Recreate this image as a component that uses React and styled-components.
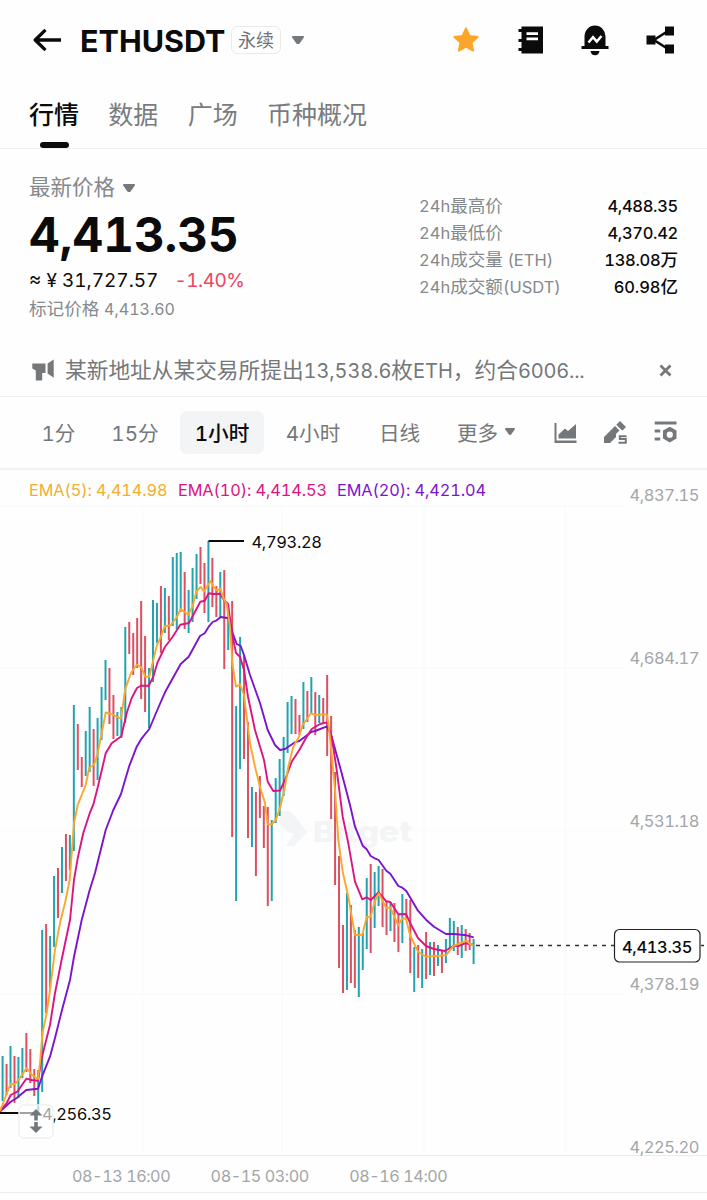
import React from "react";
import styled, { createGlobalStyle } from "styled-components";

const GlobalStyle = createGlobalStyle`
  * {
    box-sizing: border-box;
  }
  body {
    margin: 0;
    background: #fff;
    color: #0b0b0b;
    font-family: Inter, "Noto Sans CJK SC", sans-serif;
    font-feature-settings: "tnum";
  }
`;

const Page = styled.main`
  width: 707px;
  height: 1200px;
  overflow: hidden;
  background: #fefefe;
`;

const Header = styled.header`
  display: flex;
  align-items: center;
  height: 80px;
  padding: 0 32px 0 32px;
`;

const Title = styled.h1`
  margin: 2px 0 0 18px;
  width: 151px;
  font-size: 30.5px;
  line-height: 40px;
  font-weight: 700;
  white-space: nowrap;
`;

const Badge = styled.span`
  width: 50px;
  height: 28px;
  border: 1px solid #e9eaea;
  border-radius: 6px;
  color: #707476;
  font-size: 18px;
  line-height: 28px;
  text-align: center;
`;

const Caret = styled.svg`
  display: block;
  flex: none;
  width: ${(props) => props.$size || 12}px;
  height: ${(props) => (props.$size || 12) * 0.72}px;
  margin-left: ${(props) => props.$gap || 0}px;
  fill: #74787a;
`;

const HeaderIcons = styled.div`
  display: flex;
  align-items: center;
  gap: 36.6px;
  margin-left: auto;

  svg {
    display: block;
  }
`;

const Tabs = styled.nav`
  display: flex;
  gap: 29.3px;
  height: 69px;
  padding: 0 29px;
  border-bottom: 1px solid #f0f0f0;
`;

const Tab = styled.a`
  display: flex;
  flex-direction: column;
  align-items: center;
  justify-content: space-between;
  padding-top: 17px;
  color: ${(props) => (props.$active ? "#0b0b0b" : "#787c7f")};
  font-size: 25px;
  line-height: 36px;
  font-weight: ${(props) => (props.$active ? 500 : 400)};

  &::after {
    content: "";
    width: 29px;
    height: 6px;
    border-radius: 3px;
    background: ${(props) => (props.$active ? "#0b0b0b" : "transparent")};
  }
`;

const Summary = styled.section`
  display: flex;
  justify-content: space-between;
  height: 195px;
  padding: 24px 29px 0;
`;

const PriceColumn = styled.div`
  display: flex;
  flex-direction: column;
`;

const PriceLabel = styled.div`
  display: flex;
  align-items: center;
  height: 28px;
  color: #85898b;
  font-size: 21.5px;
  line-height: 26px;

  svg {
    margin-top: 2px;
  }
`;

const Price = styled.div`
  height: 67px;
  font-size: 47.5px;
  line-height: 67px;
  font-weight: 700;
`;

const FiatRow = styled.div`
  display: flex;
  gap: 16px;
  height: 28px;
  font-size: 19px;
  line-height: 26px;
  white-space: nowrap;
`;

const Change = styled.span`
  color: #ee4560;
  letter-spacing: -0.5px;
`;

const MarkPrice = styled.div`
  color: #85898b;
  font-size: 17.6px;
  line-height: 26px;
  white-space: nowrap;
`;

const Num = styled.span`
  font-size: ${(props) => props.$size}px;
  letter-spacing: ${(props) => props.$spacing || 0}px;
`;

const Stats = styled.dl`
  width: 259px;
  margin: 19px 0 0;
`;

const StatRow = styled.div`
  display: flex;
  justify-content: space-between;
  height: 27px;
  font-size: 17.6px;
  line-height: 27px;
  white-space: nowrap;

  dt {
    color: #85898b;
  }
  dd {
    margin: 0;
    font-weight: 500;
  }
`;

const News = styled.section`
  display: flex;
  align-items: center;
  height: 53px;
  padding: 0 35px 0 32px;
  border-bottom: 1px solid #efefef;
  color: #74787a;

  svg {
    display: block;
    flex: none;
  }
`;

const NewsText = styled.p`
  flex: 1;
  margin: 0 0 0 11px;
  font-size: 21.7px;
  line-height: 30px;
  white-space: nowrap;
`;

const Intervals = styled.nav`
  display: flex;
  align-items: center;
  height: 73px;
  padding-left: 21px;
  border-bottom: 2px solid #f3f3f4;
  color: #74787a;

  svg {
    display: block;
    flex: none;
  }
`;

const Interval = styled.a`
  display: flex;
  align-items: center;
  justify-content: center;
  width: ${(props) => props.$width}px;
  height: 43px;
  margin-top: -1px;
  margin-left: ${(props) => (props.$active ? 6 : 0)}px;
  border-radius: 7px;
  background: ${(props) => (props.$active ? "#f2f4f5" : "transparent")};
  color: ${(props) => (props.$active ? "#0b0b0b" : "#74787a")};
  font-size: 20.6px;
  font-weight: ${(props) => (props.$active ? 500 : 400)};
  white-space: nowrap;
`;

const Tools = styled.div`
  display: flex;
  align-items: center;
  gap: 26px;
  margin-left: 19px;
`;

const Chart = styled.section`
  position: relative;
  height: 686px;
  border-bottom: 1px solid #ebebec;
`;

const Plot = styled.svg`
  display: block;
  width: 707px;
  height: 686px;
`;

const Legend = styled.div`
  position: absolute;
  top: 8px;
  left: 29px;
  display: flex;
  font-size: 16.3px;
  line-height: 24px;
  letter-spacing: -0.08px;
  white-space: nowrap;
`;

const LegendItem = styled.span`
  width: ${(props) => props.$width}px;
  color: ${(props) => props.$color};
`;

const TimeAxis = styled.footer`
  display: flex;
  gap: 40px;
  height: 37px;
  padding-left: 72px;
  border-bottom: 1px solid #ebebec;
  color: #a3a6a8;
  font-size: 16.2px;
  line-height: 41px;
`;

const Time = styled.span`
  width: 98.6px;
  letter-spacing: -0.45px;
  white-space: nowrap;
`;

const UP = "#22a3af";
const DOWN = "#dc5062";
const ORANGE = "#f6a92c";
const PINK = "#da1484";
const PURPLE = "#7b14cf";

// [direction, high, low] for each hour
const candles = [
  ["u", 1056, 1101], ["d", 1064, 1095], ["u", 1046, 1088], ["d", 1056, 1103],
  ["u", 1057, 1098], ["u", 1048, 1078], ["d", 1033, 1072], ["d", 1049, 1083],
  ["d", 1069, 1096], ["u", 1070, 1113], ["u", 930, 1092], ["d", 924, 1013],
  ["u", 936, 988], ["u", 876, 947], ["d", 868, 918], ["u", 847, 893],
  ["d", 834, 881], ["u", 835, 870], ["u", 705, 851], ["d", 724, 770],
  ["d", 757, 787], ["u", 731, 776], ["u", 707, 772], ["d", 729, 786],
  ["u", 718, 780], ["u", 687, 740], ["u", 660, 700], ["d", 668, 724],
  ["d", 695, 739], ["u", 712, 736], ["u", 707, 738], ["u", 627, 723],
  ["d", 622, 654], ["d", 633, 675], ["d", 618, 668], ["d", 601, 699],
  ["d", 636, 712], ["u", 668, 728], ["u", 600, 682], ["u", 603, 643],
  ["d", 586, 653], ["u", 588, 633], ["d", 596, 640], ["u", 557, 626],
  ["u", 553, 629], ["u", 552, 612], ["d", 572, 629], ["u", 590, 633],
  ["u", 568, 622], ["u", 554, 599], ["d", 547, 584], ["d", 563, 613],
  ["u", 541, 622], ["d", 558, 607], ["d", 586, 617], ["u", 572, 617],
  ["d", 570, 669], ["u", 604, 650], ["d", 601, 837], ["u", 706, 901],
  ["u", 637, 769], ["d", 655, 759], ["d", 722, 838], ["u", 787, 847],
  ["d", 792, 876], ["d", 776, 818], ["d", 806, 848], ["d", 807, 906],
  ["u", 820, 901], ["u", 778, 823], ["u", 759, 816], ["u", 737, 796],
  ["u", 702, 753], ["u", 696, 734], ["d", 699, 734], ["d", 715, 735],
  ["u", 682, 729], ["d", 691, 722], ["u", 677, 714], ["d", 692, 735],
  ["u", 695, 723], ["d", 698, 723], ["d", 675, 756], ["d", 716, 819],
  ["d", 772, 885], ["d", 856, 968], ["d", 925, 993], ["u", 893, 990],
  ["d", 905, 983], ["d", 930, 988], ["u", 927, 997], ["u", 933, 970],
  ["u", 878, 949], ["d", 864, 953], ["u", 872, 928], ["u", 866, 906],
  ["d", 869, 927], ["d", 901, 935], ["u", 903, 931], ["d", 903, 942],
  ["d", 915, 952], ["u", 894, 943], ["d", 899, 920], ["d", 900, 973],
  ["u", 947, 992], ["d", 945, 978], ["u", 949, 988], ["d", 932, 979],
  ["u", 942, 975], ["d", 942, 976], ["u", 945, 966], ["d", 950, 973],
  ["u", 939, 963], ["u", 918, 948], ["u", 921, 951], ["d", 927, 955],
  ["u", 925, 958], ["d", 929, 951], ["d", 933, 950], ["u", 939, 964],
];

const ema5 =
  "0,1111 7,1093 10.5,1084 15,1084 20,1078 26.5,1068 32,1075 38,1079 40,1063 42.5,1033 46.7,1013 50,990 55,950 60,923 65,903 69.7,880 74,823 77.7,805 85.7,785 89.3,767.5 94,765 97.3,755 101.7,733 105.7,712.5 111.5,714 121,718.7 125.3,689 131,673 136.7,664.7 141,667 145.3,676.7 149.3,676.7 153.3,660 157,645 161,636.7 164.7,626.3 170.7,625.3 176.7,617.3 180.7,609 188.3,614.7 192.7,606 196.3,591.7 200.7,587 204,591.3 210.7,581 213.3,586.7 217.3,590.7 220.3,588.3 223.3,598 226.7,604 230,626.7 232.3,663 236,686.7 240,684.3 244,695 246.7,716.7 250,743 255,766.7 260,786.7 265,803 267.7,824.3 271.7,824.3 275.7,820 280,808 285,786.7 288.3,766.7 293.3,746.7 299,736.7 302.7,725 311,713.3 315,715 326.7,714.3 328.3,723 331,746.7 335,790 338.3,840 342.7,871.7 348.3,896.7 355,935 362.3,934.7 366.7,917 370.7,916.7 374.7,901.7 378.7,893.3 382.3,900 386.3,908.3 390.3,907.3 394.3,916.7 398.3,925.3 402.3,918.3 406,918.7 410,935 418,951.7 426,956.7 446,955.3 453.3,946 466.7,940.7 470,944 473.7,945";

const ema10 =
  "0,1111 6.7,1103 10.7,1095 17.3,1091.7 26.3,1078.7 31.7,1080 38,1080.7 42,1056.7 50,1025 55,993 62,958 70,920 74,880 78,856.7 83.3,833 89.7,813.3 93.7,803.3 98.3,785 105.7,753.3 111.7,743.3 121.3,736.2 126.7,713 131.7,698 137,688 141,685.7 148.7,685.7 153.3,676.7 157.3,663 164.7,647.3 172.7,636.7 180.3,624.7 189,623 193.3,615 200.3,601.7 204.7,600.7 208.7,593.3 213.3,594 220,593.7 224,600 228,604 232,633 236,653 240,656.7 244,670 248,696.7 255,730 264,760 267.7,781.7 273.3,791 280,790.5 285,780 291.7,761.7 299.3,750 306.7,736.7 311.7,729 320,724 327,722.3 331.7,736.7 336.7,770 342.7,816.7 348.3,843.3 355,881.7 362.3,899.3 366.7,897.3 370.7,900 378.7,892.3 386.3,901.3 390.3,902 398.3,914.3 406,914 410,922.7 418,938 426,946 434,949 445,951 453.3,946 458.3,946 465,943.3 473.7,944.7";

const ema20 =
  "0,1111.5 10.7,1101.7 16.7,1098 26.3,1090 38,1088.7 42,1076.7 50,1056.7 55,1038 62,1010 70,980 74,956.7 81.7,920 89.7,890 95,873 105.7,830 113.3,810 121,794 129,766.7 136.7,746.7 141.7,738.3 149.3,729 157.3,710 165.3,691.7 173.3,677.3 180.7,664 188.7,656.7 200,636 204.7,633.3 208.7,626.7 212.7,622 216.7,620.3 220.7,617 228.7,618.3 232.7,633.3 236.7,644 240.7,646 244,655 250,675 260,703 267.7,730 275,745 280,750 285,749 295,742.3 299.3,741 311.7,731.7 315,731 327,726.3 331.7,736.7 341.7,773.3 350,805 355,826.7 362.7,845.7 366.7,849.3 370.7,856 374.7,858.3 378.7,860 386.3,870.7 390.3,873.7 398.3,886 402.3,887.7 406.3,891 418,910.7 426,919.7 434,926.7 446,934 454,934 466.7,935.3 473.7,937.3";

const priceTicks = [
  ["4,837.15", 501],
  ["4,684.17", 664],
  ["4,531.18", 827],
  ["4,378.19", 990],
  ["4,225.20", 1153],
];

function DownCaret(props) {
  return (
    <Caret viewBox="0 0 12 9" preserveAspectRatio="none" {...props}>
      <path d="M1 0h10q1.4 0 .8 1.6L7.6 7.7Q6 9.6 4.4 7.7L.2 1.6Q-.4 0 1 0z" />
    </Caret>
  );
}

function BackIcon() {
  return (
    <svg width="30" height="26" viewBox="0 0 30 26" fill="none" stroke="#0b0b0b" strokeWidth="3.3">
      <path d="M13.5 2.8 3.2 13 13.500 23.2M3.200 13H29" strokeLinejoin="round" />
    </svg>
  );
}

function StarIcon() {
  return (
    <svg width="28" height="28" viewBox="0 0 28 28" fill="#fba629">
      <path
        d="M14 2.4 17.4 9.9 25.6 10.9 19.5 16.5 21.1 24.6 14 20.6 6.9 24.6 8.5 16.5 2.4 10.9 10.6 9.9z"
        stroke="#fba629"
        strokeWidth="2"
        strokeLinejoin="round"
      />
    </svg>
  );
}

function NotebookIcon() {
  return (
    <svg width="28" height="28" viewBox="0 0 28 28" fill="#0b0b0b">
      <path d="M4.500 .5H26V27.5H4.500V25H1.500V22H4.500V16H1.500V13H4.500V6H1.500V3H4.500z" />
      <path d="M9.500 6.2H21V9H9.500zM9.500 11.4H21V14.200H9.500z" fill="#fff" />
    </svg>
  );
}

function AlertIcon() {
  return (
    <svg width="28" height="32" viewBox="0 0 28 32" fill="#0b0b0b">
      <path d="M3.500 22V12.5a10.500 11 0 0 1 21 0V22H27.500V25H.5V22z" />
      <path d="M9.500 27h9q-.6 4.200-4.500 4.200T9.500 27z" />
      <path d="M7.500 18.500 12 13.200 15.800 17.600 20.500 12" fill="none" stroke="#fff" strokeWidth="2.5" />
    </svg>
  );
}

function ShareIcon() {
  return (
    <svg width="29" height="28" viewBox="0 0 29 28" fill="#0b0b0b">
      <path d="M.5 9.500h9v9h-9zM19 .5h9v9h-9zM19 18.500h9v9h-9z" />
      <path d="M22 5 8 14 22 23" fill="none" stroke="#0b0b0b" strokeWidth="2.6" />
    </svg>
  );
}

function MegaphoneIcon() {
  return (
    <svg width="22" height="22" viewBox="0 0 22 22" fill="#74787a">
      <path d="M.3 4.500H13.500V14H10.200V21.500H3.800V14L3.800 11.500.3 9.500zM15.600 4.500 21.700 .5V18.800L15.600 14.500z" />
    </svg>
  );
}

function AreaIcon() {
  return (
    <svg width="23" height="22" viewBox="0 0 23 22" fill="#74787a">
      <path d="M.5 1h2v17.500H22.500V21H.5z" />
      <path d="M4.500 16.500V12.500L11 6.500 14 9 22 2V16.500z" />
    </svg>
  );
}

function PencilIcon() {
  return (
    <svg width="25" height="25" viewBox="0 0 25 25" fill="#74787a">
      <path d="M1 17 12 6 18 12 7 23H1zM13.300 4.700 17 1 23 7 19.300 10.700z" />
      <path d="M16.500 10.500H25V25H13V14z" fill="#fefefe" />
      <path d="M23.500 16.200h-6.700v2.900h6v3.600h-7.300" fill="none" stroke="#74787a" strokeWidth="2" />
    </svg>
  );
}

function SettingsIcon() {
  return (
    <svg width="23" height="23" viewBox="0 0 23 23" fill="#74787a">
      <path d="M.7 .5H22.500V3.600H.7zM.7 8.500H6.200V11.400H.7zM.7 16.500H6.200V19.500H.7z" />
      <path
        d="M15.800 5.800 22.500 9.600V17.600L15.800 21.600 9 17.600V9.600zM15.800 10.600a3.100 3.100 0 1 0 0 6.200a3.100 3.100 0 1 0 0-6.200z"
        fillRule="evenodd"
      />
    </svg>
  );
}

function ChartPlot() {
  return (
    <Plot viewBox="0 470 707 686">
      <g stroke="#f9fafa" strokeWidth="1.5">
        <path d="M0 506H624M0 668H624M0 830.500H624M0 994H624" />
        <path d="M142.500 506V1152M282 506V1152M424 506V1152M565 506V1152" />
      </g>

      <g fill="#f3f4f5">
        <path d="M281 811h9l8 9 9 12-13 14h-8l8-12-6-2-9-9z" />
        <text x="313" y="842" fontSize="28" fontWeight="800" textLength="99" lengthAdjust="spacingAndGlyphs">
          Bitget
        </text>
      </g>

      {candles.map(([dir, high, low], i) => (
        <line
          key={i}
          x1={2.6 + i * 3.958}
          x2={2.6 + i * 3.958}
          y1={high}
          y2={low}
          stroke={dir === "u" ? UP : DOWN}
          strokeWidth="2"
        />
      ))}

      <g fill="none" strokeWidth="1.9" strokeLinejoin="round">
        <polyline points={ema20} stroke={PURPLE} />
        <polyline points={ema10} stroke={PINK} />
        <polyline points={ema5} stroke={ORANGE} />
      </g>

      <path d="M208.500 541H244M0 1113H38" stroke="#0b0b0b" strokeWidth="1.8" />
      <g fill="#0b0b0b" fontSize="16.5">
        <text x="251.500" y="547.500" textLength="70.500">4,793.28</text>
        <text x="42" y="1119.500" textLength="70">4,256.35</text>
      </g>

      <g fill="#a3a6a8" fontSize="16.5">
        {priceTicks.map(([label, y]) => (
          <text key={label} x="629.500" y={y} textLength="70">
            {label}
          </text>
        ))}
      </g>

      <path d="M476 945.500H614M701 945.500H704" stroke="#333" strokeWidth="1.4" strokeDasharray="4 5" />
      <rect x="614.500" y="929.500" width="85.500" height="32.500" rx="5" fill="#fff" stroke="#222" strokeWidth="1.2" />
      <text x="622" y="952.500" fontSize="16.500" fontWeight="550" fill="#0b0b0b" textLength="70.500">
        4,413.35
      </text>

      <rect
        x="19"
        y="1105"
        width="34"
        height="33"
        rx="5"
        fill="#fff"
        fillOpacity=".62"
        stroke="#eff0f1"
        strokeWidth="1.5"
      />
      <path
        d="M36 1109l6.500 6.500h-4.700v5h-3.600v-5h-4.700zM36 1133l6.500-6.500h-4.700v-4.500h-3.600v4.500h-4.700z"
        fill="#74787a"
      />
    </Plot>
  );
}

export default function App() {
  return (
    <>
      <GlobalStyle />
      <Page>
        <Header>
          <BackIcon />
          <Title>ETHUSDT</Title>
          <Badge>永续</Badge>
          <DownCaret $gap={11} />
          <HeaderIcons>
            <StarIcon />
            <NotebookIcon />
            <AlertIcon />
            <ShareIcon />
          </HeaderIcons>
        </Header>

        <Tabs>
          <Tab $active>行情</Tab>
          <Tab>数据</Tab>
          <Tab>广场</Tab>
          <Tab>币种概况</Tab>
        </Tabs>

        <Summary>
          <PriceColumn>
            <PriceLabel>
              最新价格
              <DownCaret $gap={8} />
            </PriceLabel>
            <Price>4,413.35</Price>
            <FiatRow>
              <span>≈ ¥ 31,727.57</span>
              <Change>-1.40%</Change>
            </FiatRow>
            <MarkPrice>
              标记价格 <Num $size={16}>4,413.60</Num>
            </MarkPrice>
          </PriceColumn>
          <Stats>
            <StatRow>
              <dt><Num $size={16.5}>24h</Num>最高价</dt>
              <dd><Num $size={16.5} $spacing={-0.3}>4,488.35</Num></dd>
            </StatRow>
            <StatRow>
              <dt><Num $size={16.5}>24h</Num>最低价</dt>
              <dd><Num $size={16.5} $spacing={-0.3}>4,370.42</Num></dd>
            </StatRow>
            <StatRow>
              <dt><Num $size={16.5}>24h</Num>成交量<Num $size={16.5}> (ETH)</Num></dt>
              <dd><Num $size={16.5} $spacing={-0.3}>138.08</Num>万</dd>
            </StatRow>
            <StatRow>
              <dt><Num $size={16.5}>24h</Num>成交额<Num $size={16.5}>(USDT)</Num></dt>
              <dd><Num $size={16.5} $spacing={-0.1}>60.98</Num>亿</dd>
            </StatRow>
          </Stats>
        </Summary>

        <News>
          <MegaphoneIcon />
          <NewsText>
            某新地址从某交易所提出<Num $size={20} $spacing={-0.1}>13,538.6</Num>枚<Num $size={20}>ETH</Num>，约合
            <Num $size={20} $spacing={-0.2}>6006...</Num>
          </NewsText>
          <svg width="13" height="13" viewBox="0 0 13 13" stroke="#74787a" strokeWidth="2.8">
            <path d="M1.500 1.500l10 10M11.500 1.500l-10 10" />
          </svg>
        </News>

        <Intervals>
          <Interval $width={75}>1分</Interval>
          <Interval $width={78}>15分</Interval>
          <Interval $width={84} $active>1小时</Interval>
          <Interval $width={98}>4小时</Interval>
          <Interval $width={75}>日线</Interval>
          <Interval $width={98}>
            更多
            <DownCaret $gap={7} $size={10} />
          </Interval>
          <Tools>
            <AreaIcon />
            <PencilIcon />
            <SettingsIcon />
          </Tools>
        </Intervals>

        <Chart>
          <ChartPlot />
          <Legend>
            <LegendItem $width={149} $color="#f2ae2e">EMA(5): 4,414.98</LegendItem>
            <LegendItem $width={159} $color="#da1484">EMA(10): 4,414.53</LegendItem>
            <LegendItem $width={150} $color="#7b14cf">EMA(20): 4,421.04</LegendItem>
          </Legend>
        </Chart>

        <TimeAxis>
          <Time>08-13 16:00</Time>
          <Time>08-15 03:00</Time>
          <Time>08-16 14:00</Time>
        </TimeAxis>
      </Page>
    </>
  );
}
